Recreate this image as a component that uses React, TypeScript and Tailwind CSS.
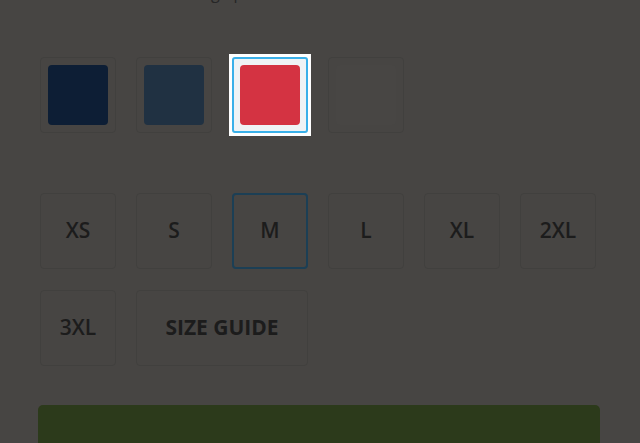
const swatches = [
    { name: 'navy', color: 'bg-[#0d1e35]' },
    { name: 'slate', color: 'bg-[#203142]' },
    { name: 'red', color: 'bg-[#d43342]', active: true },
    { name: 'white', color: 'bg-[#484644]' },
];

const sizes = ['XS', 'S', 'M', 'L', 'XL', '2XL', '3XL'];

/**
 * Colour swatch, the active one is lifted out of the dimmed page
 */
function Swatch({ color, active }: { color: string; active?: boolean }) {
    if (active) {
        return (
            <div className="relative z-10 m-[-3px] bg-white p-[3px]">
                <div className="h-[76px] w-[76px] rounded-[3px] border-2 border-[#3ab0e9] bg-[#eff3f5] p-[6px]">
                    <div className={`h-full w-full rounded-[4px] ${color}`} />
                </div>
            </div>
        );
    }
    return (
        <div className="h-[76px] w-[76px] rounded-[4px] border border-[#41403e] p-[7px]">
            <div className={`h-full w-full rounded-[4px] ${color}`} />
        </div>
    );
}

export default function App() {
    return (
        <div
            className="h-[443px] w-[640px] overflow-hidden bg-[#474543] text-[#1c1c1c]"
            style={{ fontFamily: '"Open Sans", "Liberation Sans", sans-serif' }}
        >
            <p className="mt-[-17px] pl-[34px] text-[16px] leading-[20px] text-[#262626]">
                Choose colour and sizing options
            </p>

            <div className="mt-[54px] flex gap-5 pl-10">
                {swatches.map((s) => (
                    <Swatch key={s.name} color={s.color} active={s.active} />
                ))}
            </div>

            <div className="mt-[60px] grid w-[596px] grid-cols-[repeat(6,76px)] gap-x-5 gap-y-[21px] pl-10">
                {sizes.map((size) => (
                    <button
                        key={size}
                        className={`flex h-[76px] items-center justify-center rounded-[4px] border text-[21px] font-semibold ${
                            size === 'M' ? 'border-2 border-[#1c3f55]' : 'border-[#41403e]'
                        }`}
                    >
                        {size}
                    </button>
                ))}
                <button className="col-span-2 flex h-[76px] items-center justify-center rounded-[4px] border border-[#41403e] text-[21px] font-bold">
                    SIZE GUIDE
                </button>
            </div>

            <div className="ml-[38px] mt-[39px] h-[60px] w-[562px] rounded-[5px] bg-[#2c3a1b]" />
        </div>
    );
}
